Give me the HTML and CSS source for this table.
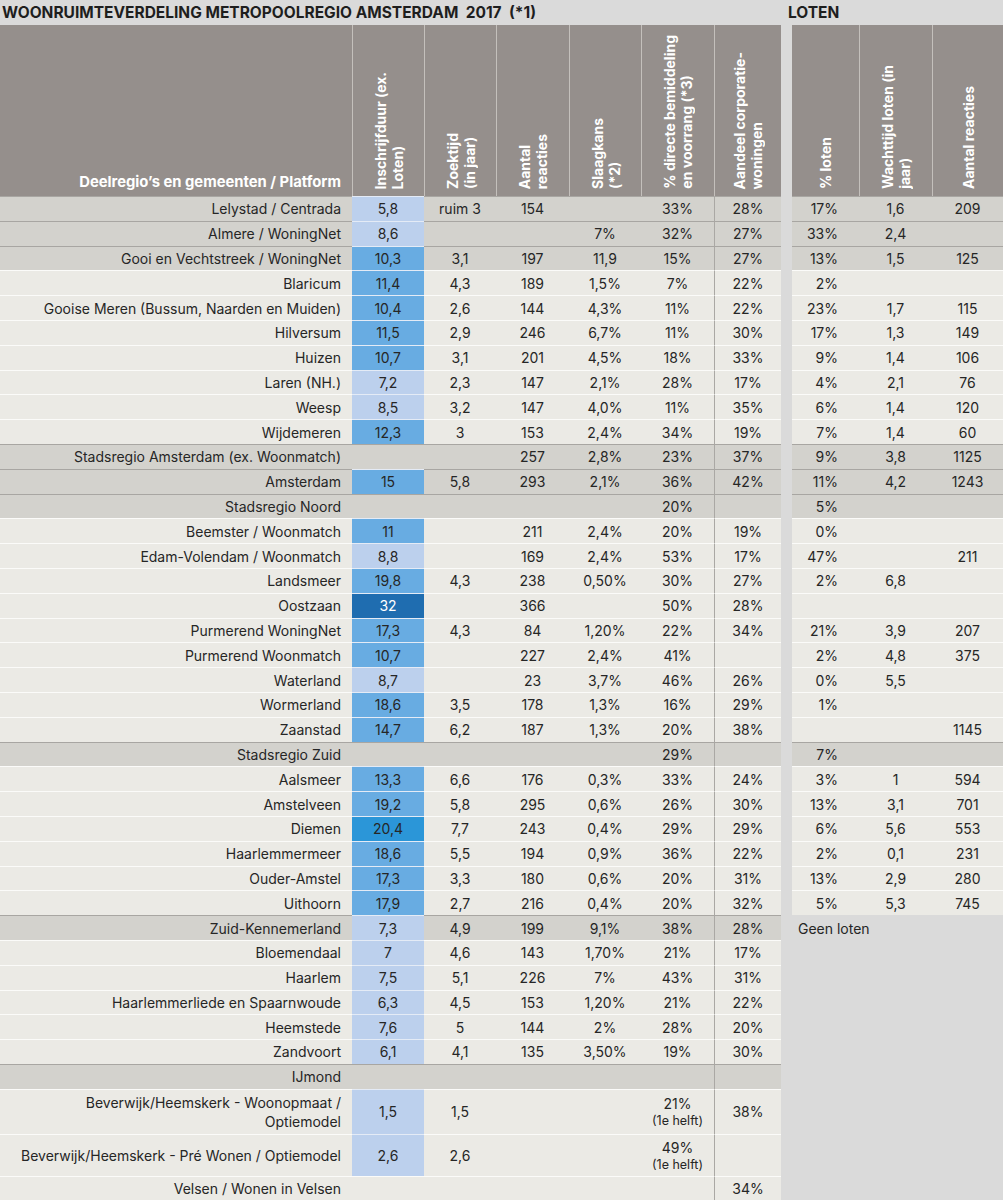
FILE: index.html
```html
<!DOCTYPE html>
<html lang="nl">
<head>
<meta charset="utf-8">
<title>Woonruimteverdeling Metropoolregio Amsterdam 2017</title>
<link rel="stylesheet" href="styles.css">
</head>
<body>
<div class="sheet">
  <div class="titlebar">
    <div class="title">WOONRUIMTEVERDELING METROPOOLREGIO AMSTERDAM&nbsp; 2017&nbsp; (*1)</div>
    <div class="title loten">LOTEN</div>
  </div>

  <div class="head">
    <div class="hc first"><span class="hname">Deelregio’s en gemeenten / Platform</span></div>
    <div class="hc"><span class="v">Inschrijfduur (ex.<br>Loten)</span></div>
    <div class="hc"><span class="v">Zoektijd<br>(in jaar)</span></div>
    <div class="hc"><span class="v">Aantal<br>reacties</span></div>
    <div class="hc"><span class="v">Slaagkans<br>(*2)</span></div>
    <div class="hc"><span class="v">% directe bemiddeling<br>en voorrang (*3)</span></div>
    <div class="hc"><span class="v">Aandeel corporatie-<br>woningen</span></div>
    <span class="gap"></span>
    <div class="hc first"><span class="v">% loten</span></div>
    <div class="hc"><span class="v">Wachttijd loten (in<br>jaar)</span></div>
    <div class="hc"><span class="v">Aantal reacties</span></div>
  </div>

  <div class="row g"><div class="n">Lelystad / Centrada</div><div class="lb">5,8</div><div>ruim 3</div><div>154</div><div></div><div>33%</div><div class="a">28%</div><span class="gap"></span><div class="pl">17%</div><div>1,6</div><div>209</div></div>
  <div class="row g"><div class="n">Almere / WoningNet</div><div class="lb">8,6</div><div></div><div></div><div>7%</div><div>32%</div><div class="a">27%</div><span class="gap"></span><div class="pl">33%</div><div>2,4</div><div></div></div>
  <div class="row g"><div class="n">Gooi en Vechtstreek / WoningNet</div><div class="mb">10,3</div><div>3,1</div><div>197</div><div>11,9</div><div>15%</div><div class="a">27%</div><span class="gap"></span><div class="pl">13%</div><div>1,5</div><div>125</div></div>
  <div class="row"><div class="n">Blaricum</div><div class="mb">11,4</div><div>4,3</div><div>189</div><div>1,5%</div><div>7%</div><div class="a">22%</div><span class="gap"></span><div class="pl">2%</div><div></div><div></div></div>
  <div class="row"><div class="n">Gooise Meren (Bussum, Naarden en Muiden)</div><div class="mb">10,4</div><div>2,6</div><div>144</div><div>4,3%</div><div>11%</div><div class="a">22%</div><span class="gap"></span><div class="pl">23%</div><div>1,7</div><div>115</div></div>
  <div class="row"><div class="n">Hilversum</div><div class="mb">11,5</div><div>2,9</div><div>246</div><div>6,7%</div><div>11%</div><div class="a">30%</div><span class="gap"></span><div class="pl">17%</div><div>1,3</div><div>149</div></div>
  <div class="row"><div class="n">Huizen</div><div class="mb">10,7</div><div>3,1</div><div>201</div><div>4,5%</div><div>18%</div><div class="a">33%</div><span class="gap"></span><div class="pl">9%</div><div>1,4</div><div>106</div></div>
  <div class="row"><div class="n">Laren (NH.)</div><div class="lb">7,2</div><div>2,3</div><div>147</div><div>2,1%</div><div>28%</div><div class="a">17%</div><span class="gap"></span><div class="pl">4%</div><div>2,1</div><div>76</div></div>
  <div class="row"><div class="n">Weesp</div><div class="lb">8,5</div><div>3,2</div><div>147</div><div>4,0%</div><div>11%</div><div class="a">35%</div><span class="gap"></span><div class="pl">6%</div><div>1,4</div><div>120</div></div>
  <div class="row"><div class="n">Wijdemeren</div><div class="mb">12,3</div><div>3</div><div>153</div><div>2,4%</div><div>34%</div><div class="a">19%</div><span class="gap"></span><div class="pl">7%</div><div>1,4</div><div>60</div></div>
  <div class="row g"><div class="n">Stadsregio Amsterdam (ex. Woonmatch)</div><div></div><div></div><div>257</div><div>2,8%</div><div>23%</div><div class="a">37%</div><span class="gap"></span><div class="pl">9%</div><div>3,8</div><div>1125</div></div>
  <div class="row g"><div class="n">Amsterdam</div><div class="mb">15</div><div>5,8</div><div>293</div><div>2,1%</div><div>36%</div><div class="a">42%</div><span class="gap"></span><div class="pl">11%</div><div>4,2</div><div>1243</div></div>
  <div class="row g"><div class="n">Stadsregio Noord</div><div></div><div></div><div></div><div></div><div>20%</div><div class="a"></div><span class="gap"></span><div class="pl">5%</div><div></div><div></div></div>
  <div class="row"><div class="n">Beemster / Woonmatch</div><div class="mb">11</div><div></div><div>211</div><div>2,4%</div><div>20%</div><div class="a">19%</div><span class="gap"></span><div class="pl">0%</div><div></div><div></div></div>
  <div class="row"><div class="n">Edam-Volendam / Woonmatch</div><div class="lb">8,8</div><div></div><div>169</div><div>2,4%</div><div>53%</div><div class="a">17%</div><span class="gap"></span><div class="pl">47%</div><div></div><div>211</div></div>
  <div class="row"><div class="n">Landsmeer</div><div class="mb">19,8</div><div>4,3</div><div>238</div><div>0,50%</div><div>30%</div><div class="a">27%</div><span class="gap"></span><div class="pl">2%</div><div>6,8</div><div></div></div>
  <div class="row"><div class="n">Oostzaan</div><div class="db">32</div><div></div><div>366</div><div></div><div>50%</div><div class="a">28%</div><span class="gap"></span><div class="pl"></div><div></div><div></div></div>
  <div class="row"><div class="n">Purmerend WoningNet</div><div class="mb">17,3</div><div>4,3</div><div>84</div><div>1,20%</div><div>22%</div><div class="a">34%</div><span class="gap"></span><div class="pl">21%</div><div>3,9</div><div>207</div></div>
  <div class="row"><div class="n">Purmerend Woonmatch</div><div class="mb">10,7</div><div></div><div>227</div><div>2,4%</div><div>41%</div><div class="a"></div><span class="gap"></span><div class="pl">2%</div><div>4,8</div><div>375</div></div>
  <div class="row"><div class="n">Waterland</div><div class="lb">8,7</div><div></div><div>23</div><div>3,7%</div><div>46%</div><div class="a">26%</div><span class="gap"></span><div class="pl">0%</div><div>5,5</div><div></div></div>
  <div class="row"><div class="n">Wormerland</div><div class="mb">18,6</div><div>3,5</div><div>178</div><div>1,3%</div><div>16%</div><div class="a">29%</div><span class="gap"></span><div class="pl">1%</div><div></div><div></div></div>
  <div class="row"><div class="n">Zaanstad</div><div class="mb">14,7</div><div>6,2</div><div>187</div><div>1,3%</div><div>20%</div><div class="a">38%</div><span class="gap"></span><div class="pl"></div><div></div><div>1145</div></div>
  <div class="row g"><div class="n">Stadsregio Zuid</div><div></div><div></div><div></div><div></div><div>29%</div><div class="a"></div><span class="gap"></span><div class="pl">7%</div><div></div><div></div></div>
  <div class="row"><div class="n">Aalsmeer</div><div class="mb">13,3</div><div>6,6</div><div>176</div><div>0,3%</div><div>33%</div><div class="a">24%</div><span class="gap"></span><div class="pl">3%</div><div>1</div><div>594</div></div>
  <div class="row"><div class="n">Amstelveen</div><div class="mb">19,2</div><div>5,8</div><div>295</div><div>0,6%</div><div>26%</div><div class="a">30%</div><span class="gap"></span><div class="pl">13%</div><div>3,1</div><div>701</div></div>
  <div class="row"><div class="n">Diemen</div><div class="bb">20,4</div><div>7,7</div><div>243</div><div>0,4%</div><div>29%</div><div class="a">29%</div><span class="gap"></span><div class="pl">6%</div><div>5,6</div><div>553</div></div>
  <div class="row"><div class="n">Haarlemmermeer</div><div class="mb">18,6</div><div>5,5</div><div>194</div><div>0,9%</div><div>36%</div><div class="a">22%</div><span class="gap"></span><div class="pl">2%</div><div>0,1</div><div>231</div></div>
  <div class="row"><div class="n">Ouder-Amstel</div><div class="mb">17,3</div><div>3,3</div><div>180</div><div>0,6%</div><div>20%</div><div class="a">31%</div><span class="gap"></span><div class="pl">13%</div><div>2,9</div><div>280</div></div>
  <div class="row"><div class="n">Uithoorn</div><div class="mb">17,9</div><div>2,7</div><div>216</div><div>0,4%</div><div>20%</div><div class="a">32%</div><span class="gap"></span><div class="pl">5%</div><div>5,3</div><div>745</div></div>
  <div class="row g"><div class="n">Zuid-Kennemerland</div><div class="lb">7,3</div><div>4,9</div><div>199</div><div>9,1%</div><div>38%</div><div class="a">28%</div><span class="rest note">Geen loten</span></div>
  <div class="row"><div class="n">Bloemendaal</div><div class="lb">7</div><div>4,6</div><div>143</div><div>1,70%</div><div>21%</div><div class="a">17%</div><span class="rest"></span></div>
  <div class="row"><div class="n">Haarlem</div><div class="lb">7,5</div><div>5,1</div><div>226</div><div>7%</div><div>43%</div><div class="a">31%</div><span class="rest"></span></div>
  <div class="row"><div class="n">Haarlemmerliede en Spaarnwoude</div><div class="lb">6,3</div><div>4,5</div><div>153</div><div>1,20%</div><div>21%</div><div class="a">22%</div><span class="rest"></span></div>
  <div class="row"><div class="n">Heemstede</div><div class="lb">7,6</div><div>5</div><div>144</div><div>2%</div><div>28%</div><div class="a">20%</div><span class="rest"></span></div>
  <div class="row"><div class="n">Zandvoort</div><div class="lb">6,1</div><div>4,1</div><div>135</div><div>3,50%</div><div>19%</div><div class="a">30%</div><span class="rest"></span></div>
  <div class="row g"><div class="n">IJmond</div><div></div><div></div><div></div><div></div><div></div><div class="a"></div><span class="rest"></span></div>
  <div class="row tall"><div class="n two">Beverwijk/Heemskerk - Woonopmaat /<br>Optiemodel</div><div class="lb">1,5</div><div>1,5</div><div></div><div></div><div class="stack"><span>21%</span><small>(1e helft)</small></div><div class="a">38%</div><span class="rest"></span></div>
  <div class="row tall"><div class="n">Beverwijk/Heemskerk - Pré Wonen / Optiemodel</div><div class="lb">2,6</div><div>2,6</div><div></div><div></div><div class="stack"><span>49%</span><small>(1e helft)</small></div><div class="a"></div><span class="rest"></span></div>
  <div class="row"><div class="n">Velsen / Wonen in Velsen</div><div></div><div></div><div></div><div></div><div></div><div class="a">34%</div><span class="rest"></span></div>
</div>
</body>
</html>
```

FILE: styles.css
```css
* { box-sizing: border-box; }

html, body {
  margin: 0;
  padding: 0;
  background: #dadada;
}

body {
  font-family: Inter, "Open Sans", "Liberation Sans", sans-serif;
  font-size: 14px;
  color: #262626;
  width: 1003px;
  height: 1200px;
  overflow: hidden;
}

.sheet {
  --cols: 352px 72px 72px 73px 72px 73px 67px 11px 67px 73px 71px;
  width: 1003px;
}

/* title bar */
.titlebar {
  display: flex;
  height: 25px;
  align-items: center;
}
.title {
  font-weight: 700;
  font-size: 15.5px;
  color: #1e1e1e;
  padding-left: 2px;
  width: 781px;
  white-space: nowrap;
}
.title.loten {
  width: auto;
  padding-left: 7px;
}

/* column header */
.head {
  display: grid;
  grid-template-columns: var(--cols);
  height: 171px;
}
.hc {
  background: #958f8c;
  border-left: 1px solid #c4c0bc;
  display: flex;
  flex-direction: column;
  justify-content: flex-end;
  align-items: center;
  padding-bottom: 7px;
  color: #fff;
  font-weight: 700;
  font-size: 14px;
}
.hc.first { border-left: 0; }
.hc:first-child {
  align-items: flex-end;
  padding-right: 11px;
  padding-bottom: 5px;
}
.hname {
  white-space: nowrap;
  font-size: 14.8px;
}
.v {
  writing-mode: vertical-rl;
  transform: rotate(180deg);
  white-space: nowrap;
  line-height: 17px;
}
.gap { background: #dadada; }

/* body rows */
.row {
  display: grid;
  grid-template-columns: var(--cols);
  height: 24.8px;
  background: #ebeae5;
}
.row.g { background: #d3d2cd; }
.row.tall { height: auto; }

.row > div {
  display: flex;
  align-items: center;
  justify-content: center;
  border-top: 1px solid #fbfbf9;
  white-space: nowrap;
}
.row.g > div { border-top-color: #a8a6a2; }

.row > div.n {
  justify-content: flex-end;
  padding-right: 11px;
  text-align: right;
}
.row > div.n.two {
  white-space: normal;
  line-height: 19px;
  padding-top: 3px;
  padding-bottom: 3px;
}
.row > div.a { border-left: 1px solid #aaa8a4; }
.row > div.pl {
  justify-content: flex-end;
  padding-right: 21px;
}

.row > div.lb,
.row > div.mb,
.row > div.bb,
.row > div.db { border-top-color: #e4ebf6; }
.row > div.lb { background: #bcd0ed; }
.row > div.mb { background: #68ace2; }
.row > div.bb { background: #2b96d8; }
.row > div.db { background: #1f6db0; color: #fff; }

.row > div.stack {
  flex-direction: column;
  line-height: 19px;
  padding: 3px 0;
}
.stack small {
  font-size: 12.5px;
  line-height: 16px;
}

.rest {
  grid-column: 8 / -1;
  background: #dadada;
}
.note {
  display: flex;
  align-items: center;
  padding-left: 17px;
  padding-top: 1px;
}
```
